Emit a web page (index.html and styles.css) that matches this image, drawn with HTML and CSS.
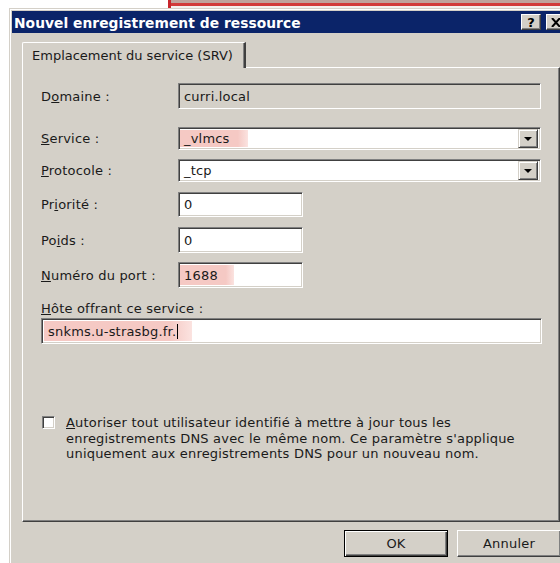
FILE: index.html
```html
<!DOCTYPE html>
<html lang="fr">
<head>
<meta charset="utf-8">
<title>Nouvel enregistrement de ressource</title>
<link rel="stylesheet" href="styles.css">
</head>
<body>
<div class="behind"></div>
<div class="dialog">
  <div class="titlebar">
    <span class="title">Nouvel enregistrement de ressource</span>
    <span class="caption-buttons">
      <span class="cap-btn help">?</span>
      <span class="cap-btn close">
        <svg width="10" height="9" viewBox="0 0 10 9"><path d="M1 0 L9 9 M9 0 L1 9" stroke="#000" stroke-width="2"/></svg>
      </span>
    </span>
  </div>
  <div class="client">
    <div class="tabs">
      <div class="tab">Emplacement du service (SRV)</div>
    </div>
    <div class="panel">
      <div class="form">
        <label class="lbl r1">D<u>o</u>maine :</label>
        <div class="field readonly r1">curri.local</div>

        <label class="lbl r2"><u>S</u>ervice :</label>
        <div class="field combo r2"><span class="hl">_vlmcs</span><span class="drop"><i></i></span></div>

        <label class="lbl r3"><u>P</u>rotocole :</label>
        <div class="field combo r3"><span>_tcp</span><span class="drop"><i></i></span></div>

        <label class="lbl r4">Pr<u>i</u>orité :</label>
        <div class="field short r4"><span>0</span></div>

        <label class="lbl r5">Po<u>i</u>ds :</label>
        <div class="field short r5"><span>0</span></div>

        <label class="lbl r6"><u>N</u>uméro du port :</label>
        <div class="field short r6"><span class="hl">1688</span></div>
      </div>

      <label class="lbl host-label"><u>H</u>ôte offrant ce service :</label>
      <div class="field host"><span class="hl hl-host">snkms.u-strasbg.fr.<span class="caret"></span></span></div>

      <div class="check">
        <span class="box"></span>
        <p class="check-text"><u>A</u>utoriser tout utilisateur identifié à mettre à jour tous les<br>enregistrements DNS avec le même nom. Ce paramètre s'applique<br>uniquement aux enregistrements DNS pour un nouveau nom.</p>
      </div>
    </div>
    <div class="actions">
      <button class="btn default">OK</button>
      <button class="btn">Annuler</button>
    </div>
  </div>
</div>
</body>
</html>
```
FILE: styles.css
```css
html, body {
  margin: 0;
  padding: 0;
  overflow: hidden;
  background: #fff;
}

body {
  width: 560px;
  height: 563px;
  font-family: "DejaVu Sans", "Liberation Sans", sans-serif;
  font-size: 13px;
  letter-spacing: 0.2px;
  color: #1a1a1a;
}

/* window peeking out behind the dialog */
.behind {
  margin-left: 168px;
  height: 8px;
  border-left: 3px solid #c8262c;
  background: linear-gradient(to bottom, #c0a29c 0 3px, #d23a3a 3px 6px, #f4f0ee 6px);
}

.dialog {
  margin-left: 9px;
  width: 558px;
  height: 560px;
  background: #d4d0c8;
  border-top: 1px solid #d4d0c8;
  border-left: 1px solid #d4d0c8;
  box-shadow: inset 1px 1px #fff;
  padding: 2px 0 0 2px;
  box-sizing: border-box;
}

.titlebar {
  height: 22px;
  background: #0b2469;
  display: flex;
  align-items: center;
  justify-content: space-between;
  padding: 0 1px 0 2px;
}

.title {
  color: #fff;
  font-weight: bold;
  font-size: 13.8px;
  letter-spacing: 0.05px;
  margin-top: 1px;
}

.caption-buttons {
  display: flex;
  gap: 5px;
}

.cap-btn {
  width: 20px;
  height: 16px;
  box-sizing: border-box;
  background: #d4d0c8;
  border: 1px solid;
  border-color: #fff #404040 #404040 #fff;
  box-shadow: inset -1px -1px #808080;
  display: flex;
  align-items: center;
  justify-content: center;
  font-weight: bold;
  font-size: 13px;
  color: #000;
}

.client {
  padding: 9px 0 0 10px;
}

.tabs {
  display: flex;
  height: 25px;
}

.tab {
  width: 224px;
  box-sizing: border-box;
  padding: 5px 0 0 9px;
  border-top: 1px solid #fff;
  border-left: 1px solid #fff;
  border-right: 2px solid #404040;
  border-top-left-radius: 2px;
  box-shadow: inset -1px 0 #808080;
  letter-spacing: 0;
  position: relative;
  z-index: 1;
  margin-bottom: -1px;
  background: #d4d0c8;
}

.panel {
  width: 538px;
  height: 455px;
  box-sizing: border-box;
  border: 1px solid;
  border-color: #fff #404040 #404040 #fff;
  box-shadow: inset -1px -1px #808080;
  padding: 15px 0 0 18px;
}

/* label / control pairs; the spacer rows keep the dialog's uneven spacing */
.form {
  display: grid;
  grid-template-columns: 137px auto;
  grid-template-rows: 26px 18px 23px 9px 23px 10px 25px 10px 26px 9px 26px;
  align-items: center;
}

.r1 { grid-row: 1; }
.r2 { grid-row: 3; }
.r3 { grid-row: 5; }
.r4 { grid-row: 7; }
.r5 { grid-row: 9; }
.r6 { grid-row: 11; }

.lbl {
  display: block;
}

.field {
  box-sizing: border-box;
  height: 100%;
  background: #fff;
  border: 1px solid;
  border-color: #808080 #fff #fff #808080;
  box-shadow: inset 1px 1px #404040, inset -1px -1px #d4d0c8;
  display: flex;
  align-items: center;
  padding-left: 5px;
  width: 363px;
}

.field.readonly {
  background: #d4d0c8;
}

.field.combo {
  justify-content: space-between;
  padding: 0 2px 0 1px;
}

.field.combo > span:first-child,
.field.short > span {
  padding-left: 4px;
  align-self: stretch;
  display: flex;
  align-items: center;
  margin: 2px 0;
}

.field.short {
  width: 125px;
  padding-left: 1px;
}

.hl {
  background: linear-gradient(to right, #f5c9c4 85%, #fbe3e0);
  align-self: stretch;
  display: flex;
  align-items: center;
  padding: 0 14px 0 4px;
  margin: 2px 0;
}

.field.combo > .hl {
  padding-right: 18px;
}

.field.short > .hl {
  padding-right: 16px;
}

.drop {
  width: 20px;
  height: 19px;
  box-sizing: border-box;
  background: #d4d0c8;
  border: 1px solid;
  border-color: #d4d0c8 #404040 #404040 #d4d0c8;
  box-shadow: inset 1px 1px #fff, inset -1px -1px #808080;
  display: flex;
  align-items: center;
  justify-content: center;
}

.drop i {
  width: 0;
  height: 0;
  border-left: 4px solid transparent;
  border-right: 4px solid transparent;
  border-top: 4px solid #000;
}

.host-label {
  margin-top: 12px;
  height: 17px;
  line-height: 17px;
}

.field.host {
  width: 501px;
  height: 26px;
  margin-top: 1px;
  padding-left: 1px;
}

.hl-host {
  padding-right: 14px;
  margin-left: 1px;
}

.caret {
  display: inline-block;
  width: 1px;
  height: 15px;
  background: #000;
  margin-left: 1px;
}

.check {
  display: flex;
  align-items: flex-start;
  margin-top: 71px;
  margin-left: 1px;
}

.box {
  width: 13px;
  height: 13px;
  flex: none;
  box-sizing: border-box;
  background: #fff;
  border: 1px solid;
  border-color: #808080 #fff #fff #808080;
  box-shadow: inset 1px 1px #404040, inset -1px -1px #d4d0c8;
  margin-top: 1px;
}

.check-text {
  margin: 0 0 0 11px;
  line-height: 15.5px;
}

.actions {
  display: flex;
  justify-content: flex-end;
  gap: 9px;
  padding: 8px 0 0 0;
  width: 539px;
}

.btn {
  width: 104px;
  height: 27px;
  box-sizing: border-box;
  font-family: "DejaVu Sans", "Liberation Sans", sans-serif;
  font-size: 13px;
  letter-spacing: 0.2px;
  color: #1a1a1a;
  background: #d4d0c8;
  border: 1px solid;
  border-color: #fff #404040 #404040 #fff;
  box-shadow: inset -1px -1px #808080;
  padding: 0;
}

.btn.default {
  border: 1px solid #000;
  box-shadow: inset 1px 1px #fff, inset -1px -1px #404040, inset -2px -2px #808080;
}
```
